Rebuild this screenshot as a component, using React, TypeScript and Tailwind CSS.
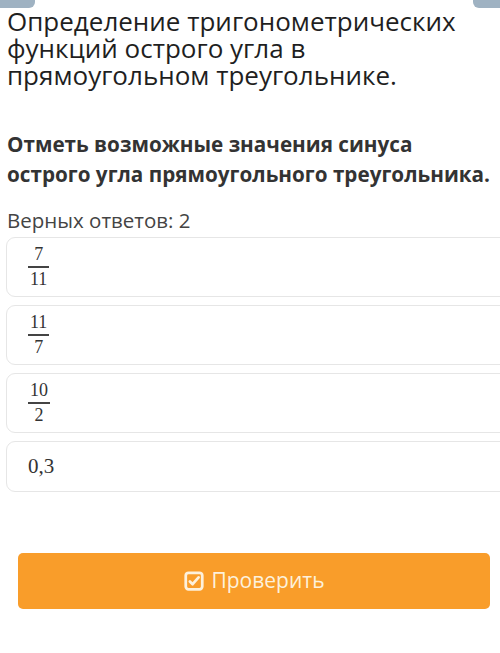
import React from "react";

type Option = { num?: string; den?: string; text?: string };

const options: Option[] = [
  { num: "7", den: "11" },
  { num: "11", den: "7" },
  { num: "10", den: "2" },
  { text: "0,3" },
];

const Fraction: React.FC<{ num: string; den: string }> = ({ num, den }) => (
  <span className="inline-flex flex-col items-center font-['Liberation_Serif',serif] text-[18px] leading-[17px] text-[#333]">
    <span className="px-[2px]">{num}</span>
    <span className="h-[1.5px] w-full bg-[#444] my-[3px]" />
    <span className="px-[2px]">{den}</span>
  </span>
);

const CheckSquare = () => (
  <svg width="22" height="22" viewBox="0 0 24 24" fill="none" stroke="currentColor" strokeWidth="3" strokeLinecap="round" strokeLinejoin="round">
    <rect x="3" y="3" width="18" height="18" rx="3" />
    <path d="M7.5 12.5l3 3 6.5-7.5" />
  </svg>
);

export default function App() {
  return (
    <div className="relative w-[500px] h-[653px] bg-white overflow-hidden font-['Open_Sans',sans-serif]">
      {/* cut-off header buttons */}
      <div className="absolute left-0 top-0 w-[35px] h-[8px] bg-[#9fb2c2] rounded-br-[6px]" />
      <div className="absolute right-0 top-0 w-[27px] h-[8px] bg-[#9fb2c2] rounded-bl-[6px]" />

      <div className="pl-[7px] pt-[8px]">
        <h1 className="pr-[6px] text-[26px] leading-[27px] text-[#1f1f1f]">
          Определение тригонометрических функций острого угла в прямоугольном треугольнике.
        </h1>

        <p className="mt-[40px] text-[20.7px] leading-[30px] font-bold text-[#333]">
          Отметь возможные значения синуса острого угла прямоугольного треугольника.
        </p>

        <p className="mt-[19px] text-[20.5px] leading-[24px] text-[#444]">Верных ответов: 2</p>
      </div>

      <div className="mt-[5px] pl-[6px] flex flex-col gap-[8px]">
        {options.map((o, i) => (
          <div
            key={i}
            className={`w-[510px] border border-[#e6e6e6] rounded-[9px] pl-[21px] flex items-center ${o.text ? "h-[51px]" : "h-[60px]"}`}
          >
            {o.text ? (
              <span className="font-['Liberation_Serif',serif] text-[21px] text-[#333]">{o.text}</span>
            ) : (
              <Fraction num={o.num!} den={o.den!} />
            )}
          </div>
        ))}
      </div>

      <div className="mt-[61px] pl-[18px] pr-[10px]">
        <button className="w-full h-[56px] rounded-[5px] bg-[#f99d2a] text-[#fdf1dc] flex items-center justify-center gap-[6px] text-[21px]">
          <CheckSquare />
          <span>Проверить</span>
        </button>
      </div>
    </div>
  );
}
